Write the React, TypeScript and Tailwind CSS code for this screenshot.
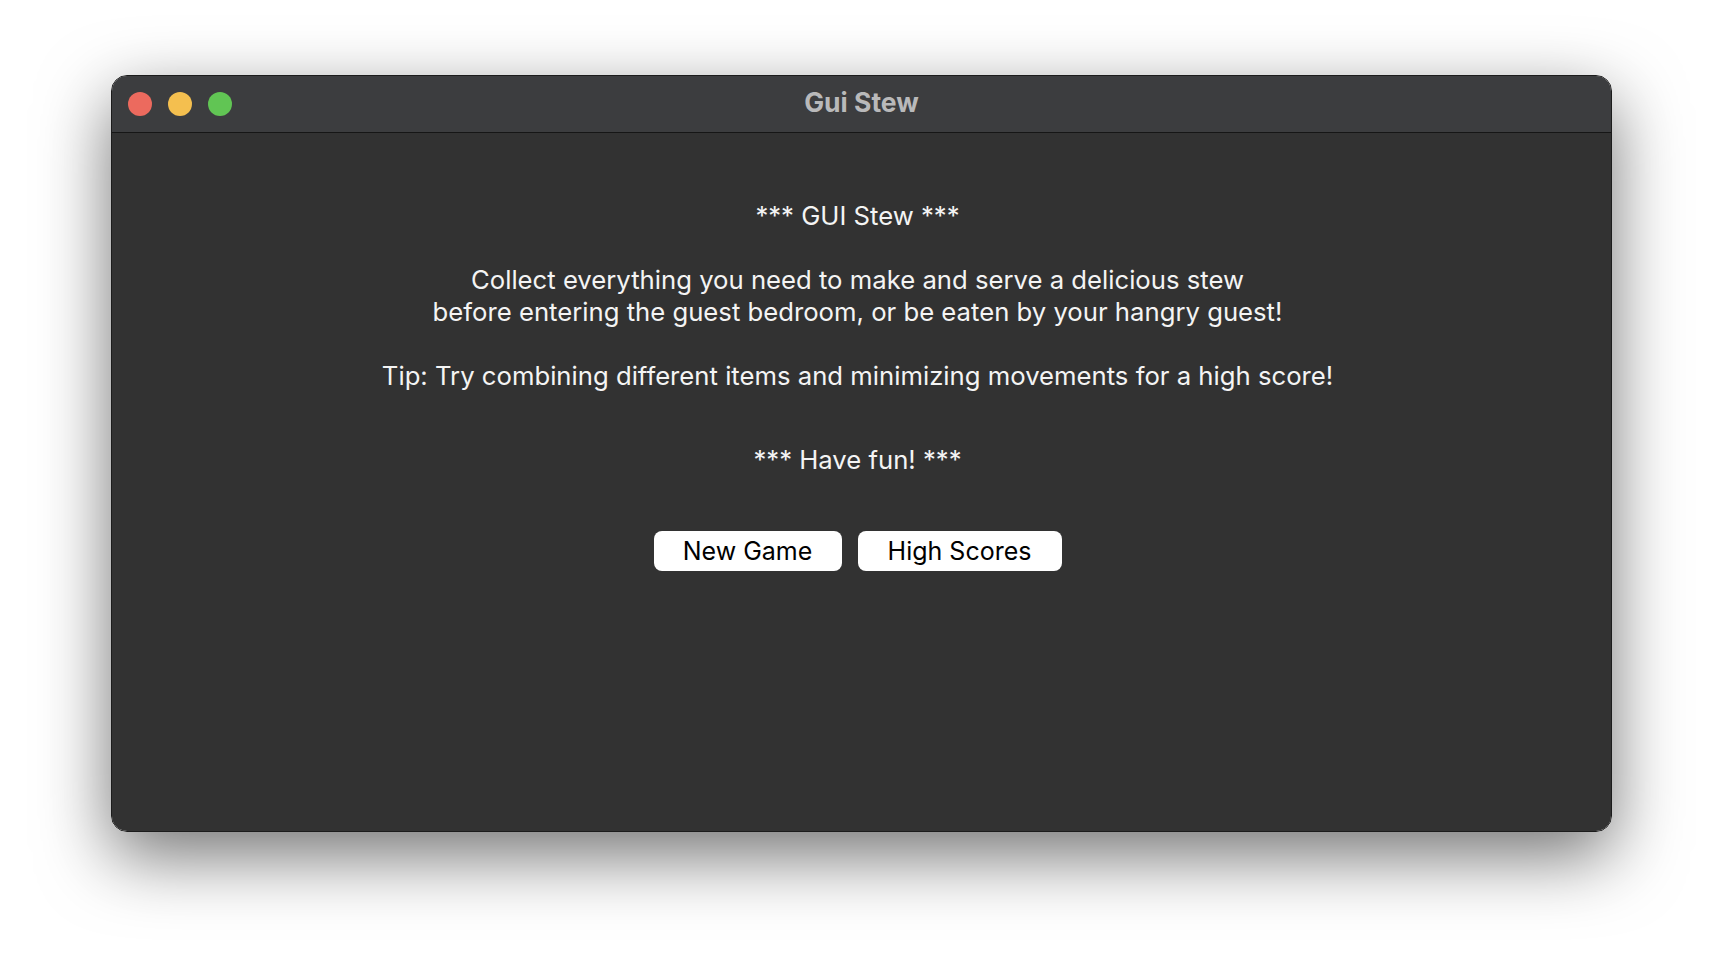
import React from 'react';

const font = { fontFamily: 'Inter, "Noto Sans", sans-serif' };

function TrafficLights() {
  return (
    <div className="flex items-center gap-4 pl-[16px]">
      <span className="block h-6 w-6 rounded-full bg-[#ec6a5e]" />
      <span className="block h-6 w-6 rounded-full bg-[#f4bf4f]" />
      <span className="block h-6 w-6 rounded-full bg-[#61c554]" />
    </div>
  );
}

export default function App() {
  return (
    <div className="h-[980px] w-[1724px] overflow-hidden bg-white" style={font}>
      <div className="ml-[111px] mt-[75px] h-[757px] w-[1501px] overflow-hidden rounded-[16px] border border-[#1c1c1c] shadow-[0_24px_70px_rgba(0,0,0,0.55)]">
        <div className="relative flex h-[57px] items-center border-b border-[#161616] bg-[#3c3d3f]">
          <TrafficLights />
          <div className="pointer-events-none absolute inset-0 flex items-center justify-center pb-[2px] text-[26.5px] font-bold text-[#b9b9ba]">
            Gui Stew
          </div>
        </div>
        <div className="flex h-[698px] flex-col items-center bg-[#323232] pr-[8px] pt-[67px] text-center text-[25.7px] leading-[32px] text-[#f4f4f4]">
          <p>*** GUI Stew ***</p>
          <p className="mt-8">Collect everything you need to make and serve a delicious stew</p>
          <p>before entering the guest bedroom, or be eaten by your hangry guest!</p>
          <p className="mt-8">Tip: Try combining different items and minimizing movements for a high score!</p>
          <p className="mt-[52px]">*** Have fun! ***</p>
          <div className="mt-[55px] flex gap-4">
            <button className="h-10 w-[188px] rounded-lg bg-white text-[25px] text-black">New Game</button>
            <button className="h-10 w-[204px] rounded-lg bg-white text-[25px] text-black">High Scores</button>
          </div>
        </div>
      </div>
    </div>
  );
}
